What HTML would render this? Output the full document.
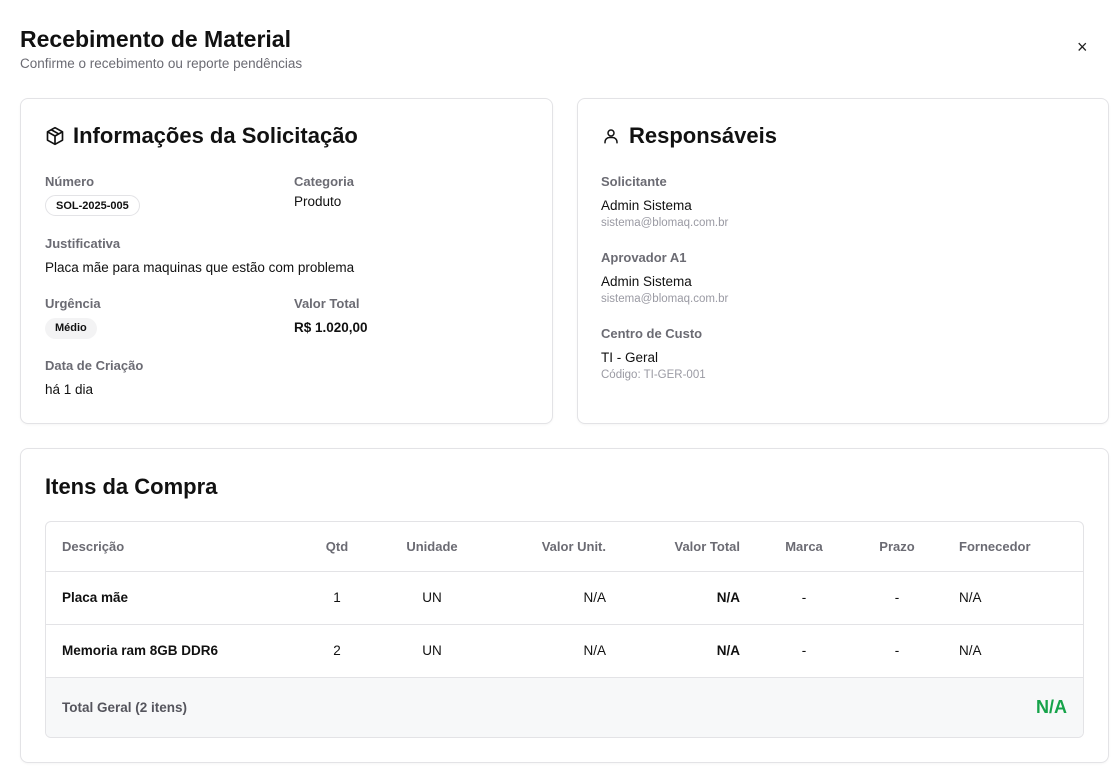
<!DOCTYPE html>
<html><head><meta charset="utf-8">
<style>
*{margin:0;padding:0;box-sizing:border-box}
body{width:1118px;height:773px;background:#fff;font-family:"Liberation Sans",sans-serif;color:#111;position:relative;overflow:hidden}
.a{position:absolute;white-space:nowrap}
.card{position:absolute;border:1px solid #e3e3e6;border-radius:8px;background:#fff;box-shadow:0 1px 2px rgba(0,0,0,.04)}
.lbl{font-size:13px;font-weight:bold;color:#6b6b73}
.val{font-size:13.5px;color:#111}
.sm{font-size:11.5px;color:#9a9aa3}
.pill{position:absolute;border-radius:12px;font-size:11px;font-weight:bold;padding:0 10px;height:21px;line-height:21px}
.th{font-size:13px;font-weight:bold;color:#6b6b73}
.td{font-size:13.5px;color:#111}
.h{font-size:22px;font-weight:bold}
</style></head><body>
<div class="a" style="left:20px;top:26px;font-size:23px;font-weight:bold;color:#111">Recebimento de Material</div>
<div class="a" style="left:20px;top:56px;font-size:13.5px;color:#6b6b73">Confirme o recebimento ou reporte pendências</div>
<div class="a" style="left:1077px;top:37px;font-size:18px;color:#222">×</div>

<div class="card" style="left:20px;top:98px;width:533px;height:326px"></div>
<svg class="a" style="left:45px;top:126px" width="20" height="20" viewBox="0 0 24 24" fill="none" stroke="#111" stroke-width="2" stroke-linejoin="round"><path d="M12 2l9 5v10l-9 5-9-5V7z"/><path d="M3 7l9 5 9-5M12 12v10M7.5 4.5l9 5"/></svg>
<div class="a h" style="left:73px;top:123px">Informações da Solicitação</div>
<div class="a lbl" style="left:45px;top:174px">Número</div>
<div class="pill" style="left:45px;top:195px;border:1px solid #e3e3e6;color:#111">SOL-2025-005</div>
<div class="a lbl" style="left:294px;top:174px">Categoria</div>
<div class="a val" style="left:294px;top:194px">Produto</div>
<div class="a lbl" style="left:45px;top:236px">Justificativa</div>
<div class="a val" style="left:45px;top:260px">Placa mãe para maquinas que estão com problema</div>
<div class="a lbl" style="left:45px;top:296px">Urgência</div>
<div class="pill" style="left:45px;top:318px;background:#f3f3f4;color:#111">Médio</div>
<div class="a lbl" style="left:294px;top:296px">Valor Total</div>
<div class="a val" style="left:294px;top:320px;font-weight:bold">R$ 1.020,00</div>
<div class="a lbl" style="left:45px;top:358px">Data de Criação</div>
<div class="a val" style="left:45px;top:382px">há 1 dia</div>

<div class="card" style="left:577px;top:98px;width:532px;height:326px"></div>
<svg class="a" style="left:602px;top:126px" width="18" height="20" viewBox="0 0 24 24" fill="none" stroke="#111" stroke-width="2" stroke-linecap="round"><circle cx="12" cy="8" r="4"/><path d="M4 21v-1a6 6 0 0 1 6-6h4a6 6 0 0 1 6 6v1"/></svg>
<div class="a h" style="left:629px;top:123px">Responsáveis</div>
<div class="a lbl" style="left:601px;top:174px">Solicitante</div>
<div class="a val" style="left:601px;top:198px">Admin Sistema</div>
<div class="a sm" style="left:601px;top:217px">sistema@blomaq.com.br</div>
<div class="a lbl" style="left:601px;top:250px">Aprovador A1</div>
<div class="a val" style="left:601px;top:274px">Admin Sistema</div>
<div class="a sm" style="left:601px;top:293px">sistema@blomaq.com.br</div>
<div class="a lbl" style="left:601px;top:326px">Centro de Custo</div>
<div class="a val" style="left:601px;top:350px">TI - Geral</div>
<div class="a sm" style="left:601px;top:369px">Código: TI-GER-001</div>

<div class="card" style="left:20px;top:448px;width:1089px;height:315px"></div>
<div class="a h" style="left:45px;top:474px">Itens da Compra</div>
<div class="a" style="left:45px;top:521px;width:1039px;height:217px;border:1px solid #e3e3e6;border-radius:6px;overflow:hidden">
 <div class="a" style="left:0;top:49px;width:100%;border-top:1px solid #e3e3e6"></div>
 <div class="a" style="left:0;top:102px;width:100%;border-top:1px solid #e3e3e6"></div>
 <div class="a" style="left:0;top:155px;width:100%;height:62px;border-top:1px solid #e3e3e6;background:#f7f8f9"></div>
</div>
<div class="a th" style="left:62px;top:539px">Descrição</div>
<div class="a th" style="left:317px;top:539px;width:40px;text-align:center">Qtd</div>
<div class="a th" style="left:392px;top:539px;width:80px;text-align:center">Unidade</div>
<div class="a th" style="left:506px;top:539px;width:100px;text-align:right">Valor Unit.</div>
<div class="a th" style="left:640px;top:539px;width:100px;text-align:right">Valor Total</div>
<div class="a th" style="left:774px;top:539px;width:60px;text-align:center">Marca</div>
<div class="a th" style="left:867px;top:539px;width:60px;text-align:center">Prazo</div>
<div class="a th" style="left:959px;top:539px">Fornecedor</div>

<div class="a td" style="left:62px;top:590px;font-weight:bold">Placa mãe</div>
<div class="a td" style="left:317px;top:590px;width:40px;text-align:center">1</div>
<div class="a td" style="left:392px;top:590px;width:80px;text-align:center">UN</div>
<div class="a td" style="left:506px;top:590px;width:100px;text-align:right">N/A</div>
<div class="a td" style="left:640px;top:590px;width:100px;text-align:right;font-weight:bold">N/A</div>
<div class="a td" style="left:774px;top:590px;width:60px;text-align:center">-</div>
<div class="a td" style="left:867px;top:590px;width:60px;text-align:center">-</div>
<div class="a td" style="left:959px;top:590px">N/A</div>

<div class="a td" style="left:62px;top:643px;font-weight:bold">Memoria ram 8GB DDR6</div>
<div class="a td" style="left:317px;top:643px;width:40px;text-align:center">2</div>
<div class="a td" style="left:392px;top:643px;width:80px;text-align:center">UN</div>
<div class="a td" style="left:506px;top:643px;width:100px;text-align:right">N/A</div>
<div class="a td" style="left:640px;top:643px;width:100px;text-align:right;font-weight:bold">N/A</div>
<div class="a td" style="left:774px;top:643px;width:60px;text-align:center">-</div>
<div class="a td" style="left:867px;top:643px;width:60px;text-align:center">-</div>
<div class="a td" style="left:959px;top:643px">N/A</div>

<div class="a" style="left:62px;top:700px;font-size:13.5px;font-weight:bold;color:#55555d">Total Geral (2 itens)</div>
<div class="a" style="left:967px;top:697px;width:100px;text-align:right;font-size:18px;font-weight:bold;color:#16a34a">N/A</div>
</body></html>
